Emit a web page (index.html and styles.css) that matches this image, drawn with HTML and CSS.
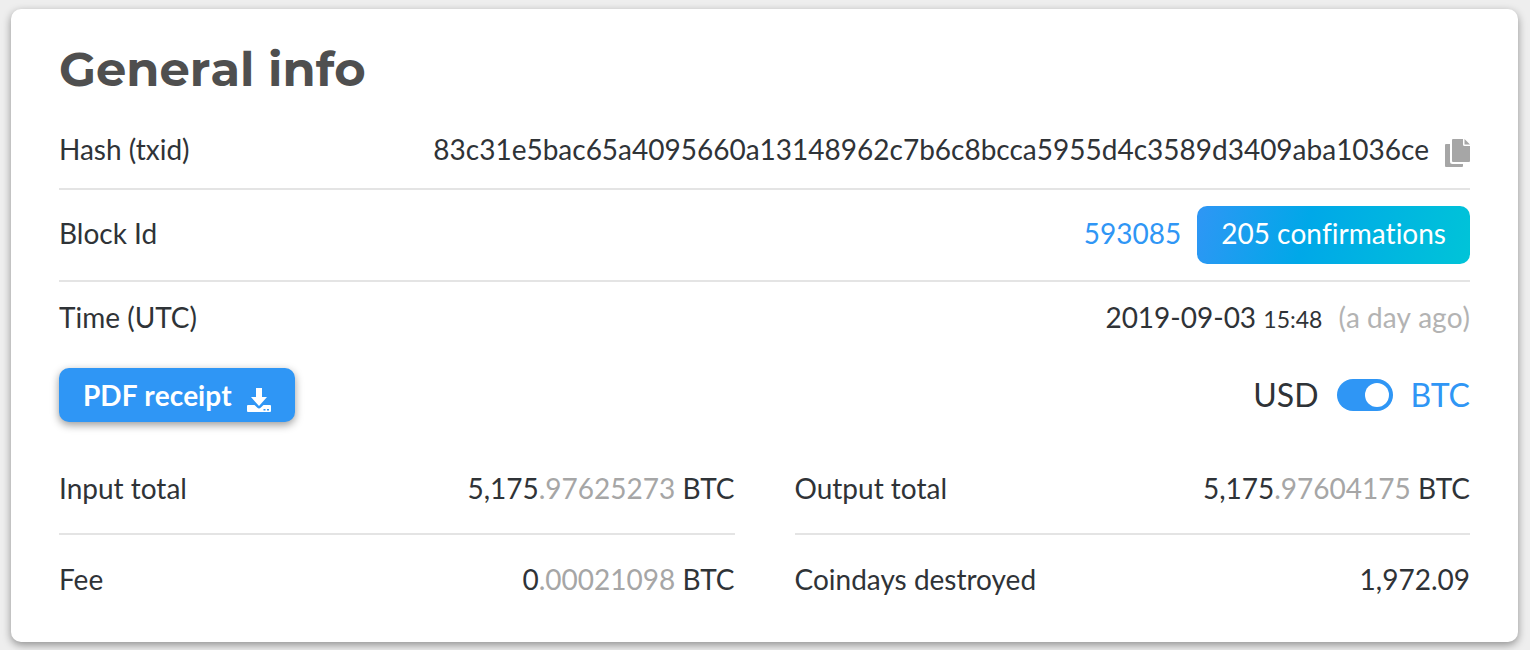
FILE: index.html
```html
<!DOCTYPE html>
<html lang="en">

<head>
    <meta charset="UTF-8">
    <meta name="viewport" content="width=device-width, initial-scale=1.0">
    <title>General info</title>
    <link rel="stylesheet" href="styles.css">
</head>

<body>
    <main class="card">
        <h1>General info</h1>

        <!-- Transaction details -->
        <dl class="details">
            <div class="row">
                <dt>Hash (txid)</dt>
                <dd>
                    <span>83c31e5bac65a4095660a13148962c7b6c8bcca5955d4c3589d3409aba1036ce</span>
                    <button type="button" class="copy" aria-label="Copy hash">
                        <svg width="25" height="28" viewBox="0 0 25 28" fill="#a6a6a6">
                            <path d="M1 5h4v17.500a2.500 2.500 0 0 0 2.500 2.500H18v2a1 1 0 0 1-1 1H1a1 1 0 0 1-1-1V6a1 1 0 0 1 1-1z" />
                            <path d="M8 0h10v5.500a1.500 1.500 0 0 0 1.500 1.500H25v15a1 1 0 0 1-1 1H8a1 1 0 0 1-1-1V1a1 1 0 0 1 1-1z" />
                            <path d="M19.500 0L25 5.500h-5.500z" />
                        </svg>
                    </button>
                </dd>
            </div>
            <div class="row">
                <dt>Block Id</dt>
                <dd>
                    <a href="#">593085</a>
                    <span class="badge">205 confirmations</span>
                </dd>
            </div>
            <div class="row">
                <dt>Time (UTC)</dt>
                <dd>
                    <span>2019-09-03 <span class="time">15:48</span></span>
                    <span class="ago">(a day ago)</span>
                </dd>
            </div>
        </dl>

        <!-- Receipt button and currency switch -->
        <div class="actions">
            <button type="button" class="receipt">
                PDF receipt
                <svg width="24" height="24" viewBox="0 0 24 24" fill="#fff">
                    <path d="M9 0h6v9h5l-8 9-8-9h5z" />
                    <path d="M1 17h6.500l2.600 2.600a2.700 2.700 0 0 0 3.800 0L16.500 17H23a1 1 0 0 1 1 1v5a1 1 0 0 1-1 1H1a1 1 0 0 1-1-1v-5a1 1 0 0 1 1-1z" />
                    <path fill="#2f96f5" d="M16.500 21h2v1.500h-2zM20 21h2v1.500h-2z" />
                </svg>
            </button>
            <label class="currency">
                <span>USD</span>
                <input type="checkbox" class="switch" checked>
                <span class="active">BTC</span>
            </label>
        </div>

        <!-- Totals -->
        <dl class="totals">
            <div class="row">
                <dt>Input total</dt>
                <dd><span>5,175<span class="decimals">.97625273</span> BTC</span></dd>
            </div>
            <div class="row">
                <dt>Output total</dt>
                <dd><span>5,175<span class="decimals">.97604175</span> BTC</span></dd>
            </div>
            <div class="row">
                <dt>Fee</dt>
                <dd><span>0<span class="decimals">.00021098</span> BTC</span></dd>
            </div>
            <div class="row">
                <dt>Coindays destroyed</dt>
                <dd>1,972.09</dd>
            </div>
        </dl>
    </main>
</body>

</html>
```

FILE: styles.css
```css
* {
    box-sizing: border-box;
}

body {
    margin: 0;
    padding: 9px 12px 8px 11px;
    background-color: #eee;
    color: #2f3337;
    font-family: Lato, sans-serif;
    font-size: 28px;
    font-variant-ligatures: none;
    line-height: 40px;
}

.card {
    padding: 30px 48px 18px;
    background: #fff;
    border-radius: 10px;
    box-shadow: 0 3px 8px rgba(0, 0, 0, 0.4);
}

h1 {
    margin: 0 0 14px;
    color: #4f4f4f;
    font-family: Montserrat, Inter, sans-serif;
    font-size: 48px;
    font-weight: 700;
    font-kerning: none;
    line-height: 60px;
}

dl,
dd {
    margin: 0;
}

.row {
    display: flex;
    justify-content: space-between;
    align-items: baseline;
    padding: 16px 0;
    border-bottom: 2px solid #e4e4e4;
}

.details .row:first-child {
    padding-bottom: 19px;
}

.details .row:last-child {
    padding: 15px 0;
    border-bottom: none;
}

dd {
    display: flex;
    align-items: baseline;
    gap: 16px;
}

a,
.active {
    color: #2f96f5;
    text-decoration: none;
}

.copy {
    display: flex;
    align-self: center;
    padding: 8px 0 0;
    border: none;
    background: none;
    cursor: pointer;
}

.badge {
    padding: 7px 24px 11px;
    border-radius: 10px;
    background: linear-gradient(105deg, #2f96f5, #00a8e8 40%, #00c4d8);
    color: #fff;
    font-kerning: none;
}

.time {
    font-size: 23px;
    line-height: 1;
}

.ago {
    color: #b3b3b3;
    font-kerning: none;
}

.actions {
    display: flex;
    justify-content: space-between;
    align-items: center;
    margin: 16px 0 22px;
}

.receipt {
    display: flex;
    align-items: center;
    gap: 15px;
    padding: 7px 24px;
    border: none;
    border-radius: 10px;
    background-color: #2f96f5;
    box-shadow: 0 3px 8px rgba(0, 0, 0, 0.4);
    color: #fff;
    font: inherit;
    font-weight: 700;
    font-kerning: none;
    cursor: pointer;
}

.receipt svg {
    margin-top: 10px;
}

.currency {
    display: flex;
    align-items: center;
    gap: 18px;
    font-size: 32px;
}

.switch {
    appearance: none;
    display: flex;
    width: 56px;
    height: 32px;
    margin: 0;
    padding: 4px;
    border-radius: 16px;
    background-color: #b3b3b3;
    cursor: pointer;
}

.switch::before {
    content: "";
    width: 24px;
    height: 24px;
    border-radius: 50%;
    background: #fff;
}

.switch:checked {
    justify-content: flex-end;
    background-color: #2f96f5;
}

.totals {
    display: grid;
    grid-template-columns: 1fr 1fr;
    column-gap: 60px;
}

.totals .row {
    padding: 24px 0 25px;
}

.totals .row:nth-last-child(-n+2) {
    border-bottom: none;
}

.decimals {
    color: #a6a6a6;
}
```
